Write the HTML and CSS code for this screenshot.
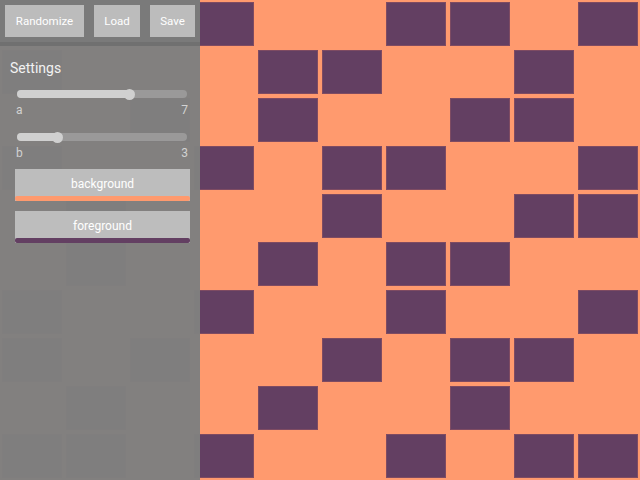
FILE: index.html
```html
<!DOCTYPE html>
<html>
<head>
<meta charset="utf-8">
<link rel="stylesheet" href="styles.css">
</head>
<body>
<div class="stage">
  <div class="grid">
    <div class="c"></div><div class="c on"></div><div class="c"></div><div class="c on"></div><div class="c"></div><div class="c"></div><div class="c on"></div><div class="c on"></div><div class="c"></div><div class="c on"></div>
    <div class="c on"></div><div class="c"></div><div class="c"></div><div class="c"></div><div class="c on"></div><div class="c on"></div><div class="c"></div><div class="c"></div><div class="c on"></div><div class="c"></div>
    <div class="c"></div><div class="c"></div><div class="c on"></div><div class="c"></div><div class="c on"></div><div class="c"></div><div class="c"></div><div class="c on"></div><div class="c on"></div><div class="c"></div>
    <div class="c on"></div><div class="c"></div><div class="c"></div><div class="c on"></div><div class="c"></div><div class="c on"></div><div class="c on"></div><div class="c"></div><div class="c"></div><div class="c on"></div>
    <div class="c"></div><div class="c on"></div><div class="c"></div><div class="c"></div><div class="c"></div><div class="c on"></div><div class="c"></div><div class="c"></div><div class="c on"></div><div class="c on"></div>
    <div class="c"></div><div class="c on"></div><div class="c"></div><div class="c"></div><div class="c on"></div><div class="c"></div><div class="c on"></div><div class="c on"></div><div class="c"></div><div class="c"></div>
    <div class="c on"></div><div class="c"></div><div class="c"></div><div class="c on"></div><div class="c"></div><div class="c"></div><div class="c on"></div><div class="c"></div><div class="c"></div><div class="c on"></div>
    <div class="c on"></div><div class="c"></div><div class="c on"></div><div class="c"></div><div class="c"></div><div class="c on"></div><div class="c"></div><div class="c on"></div><div class="c on"></div><div class="c"></div>
    <div class="c"></div><div class="c on"></div><div class="c"></div><div class="c"></div><div class="c on"></div><div class="c"></div><div class="c"></div><div class="c on"></div><div class="c"></div><div class="c"></div>
    <div class="c on"></div><div class="c on"></div><div class="c"></div><div class="c on"></div><div class="c"></div><div class="c"></div><div class="c on"></div><div class="c"></div><div class="c on"></div><div class="c on"></div>
  </div>

  <aside class="panel">
    <div class="topbar">
      <button class="tbtn w-rand">Randomize</button>
      <button class="tbtn w-load">Load</button>
      <button class="tbtn w-save">Save</button>
    </div>
    <div class="settings">
      <div class="title">Settings</div>
      <div class="slider">
        <div class="track"><div class="fill" style="width:68%"></div></div>
        <div class="labels"><span>a</span><span>7</span></div>
      </div>
      <div class="slider">
        <div class="track"><div class="fill" style="width:26%"></div></div>
        <div class="labels"><span>b</span><span>3</span></div>
      </div>
      <button class="color-btn"><span class="cb-label">background</span><span class="cb-bar bar-bg"></span></button>
      <button class="color-btn"><span class="cb-label">foreground</span><span class="cb-bar bar-fg"></span></button>
    </div>
  </aside>
</div>
</body>
</html>
```

FILE: styles.css
```css
html, body {
  margin: 0;
  padding: 0;
}
body {
  width: 640px;
  height: 480px;
  overflow: hidden;
  font-family: Roboto, "Liberation Sans", sans-serif;
}
.stage {
  position: relative;
  width: 640px;
  height: 480px;
}
.grid {
  display: grid;
  grid-template-columns: repeat(10, 64px);
  grid-template-rows: repeat(10, 48px);
  background: #ff9a6e;
  width: 640px;
  height: 480px;
}
.c.on {
  margin: 2px;
  background: #633f62;
  box-shadow: 0 0 0 1px rgba(160, 90, 100, 0.45) inset;
}
.panel {
  position: absolute;
  left: 0;
  top: 0;
  width: 200px;
  height: 480px;
  background: rgba(128, 127, 127, 0.985);
  display: flex;
  flex-direction: column;
}
.topbar {
  display: flex;
  gap: 10px;
  padding: 5px;
  height: 32px;
  background: #7a7a7a;
  border-bottom: 4px solid #707070;
}
.tbtn {
  border: none;
  background: #bcbcbc;
  color: #ffffff;
  font-family: Roboto, "Liberation Sans", sans-serif;
  font-size: 11.5px;
  height: 32px;
  padding: 0;
  cursor: pointer;
}
.w-rand { width: 79px; }
.w-load { width: 46px; }
.w-save { width: 45px; }
.settings {
  display: flex;
  flex-direction: column;
  padding: 14px 10px 0 10px;
}
.title {
  color: #f2f2f2;
  font-size: 14px;
  line-height: 16px;
  height: 16px;
  margin-bottom: 10px;
}
.slider {
  display: flex;
  flex-direction: column;
  margin-bottom: 12px;
}
.track {
  position: relative;
  margin: 4px 3px 4px 7px;
  height: 8px;
  border-radius: 4px;
  background: #9a9999;
}
.fill {
  height: 8px;
  border-radius: 4px;
  background: #d0d0d0;
  position: relative;
}
.fill::after {
  content: "";
  position: absolute;
  right: -2px;
  top: -1.5px;
  width: 11px;
  height: 11px;
  border-radius: 50%;
  background: #d0d0d0;
}
.labels {
  display: flex;
  justify-content: space-between;
  padding: 1px 2px 0 6px;
  height: 14px;
  line-height: 14px;
  font-size: 12px;
  color: #d2d2d2;
}
.slider + .slider {
  margin-bottom: 9px;
}
.color-btn {
  display: flex;
  flex-direction: column;
  margin: 0 0 10px 5px;
  width: 175px;
  height: 32px;
  padding: 0;
  border: none;
  background: #bdbdbd;
  font-family: Roboto, "Liberation Sans", sans-serif;
}
.cb-label {
  flex: 1;
  display: flex;
  align-items: center;
  justify-content: center;
  padding-top: 2px;
  color: #ffffff;
  font-size: 12px;
}
.cb-bar {
  height: 5px;
  border-radius: 2px;
  align-self: stretch;
}
.bar-bg { background: #ff9a6e; }
.bar-fg { background: #633f62; }
```
